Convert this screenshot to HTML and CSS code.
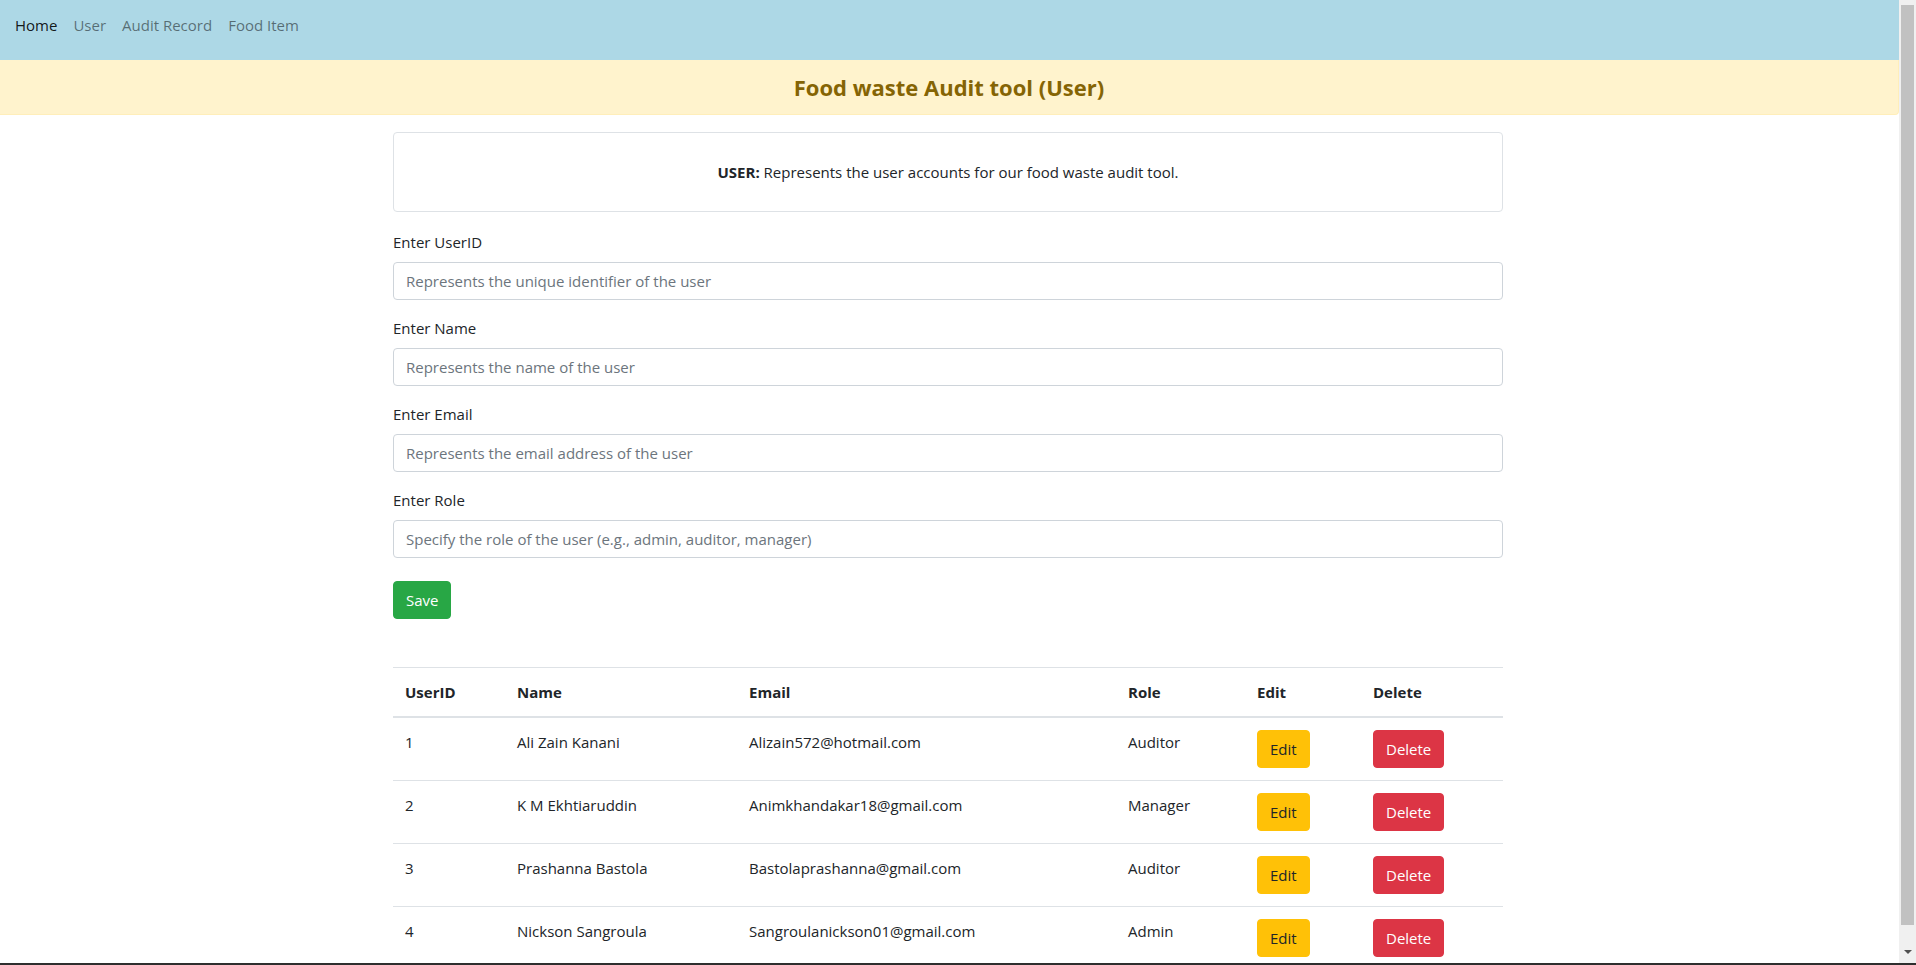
FILE: index.html
```html
<!DOCTYPE html>
<html lang="en">
<head>
<meta charset="utf-8">
<title>Food waste Audit tool (User)</title>
<link rel="stylesheet" href="styles.css">
</head>
<body>
<div class="page">
  <nav class="navbar">
    <a class="nav-link active" href="#">Home</a>
    <a class="nav-link" href="#">User</a>
    <a class="nav-link" href="#">Audit Record</a>
    <a class="nav-link" href="#">Food Item</a>
  </nav>
  <div class="banner">
    <h3 class="banner-title">Food waste Audit tool (User)</h3>
  </div>
  <main class="container">
    <div class="info-box">
      <p class="info-text"><strong>USER:</strong> Represents the user accounts for our food waste audit tool.</p>
    </div>
    <form class="user-form">
      <div class="form-group">
        <label class="form-label" for="uid">Enter UserID</label>
        <input class="form-control" id="uid" type="text" placeholder="Represents the unique identifier of the user">
      </div>
      <div class="form-group">
        <label class="form-label" for="uname">Enter Name</label>
        <input class="form-control" id="uname" type="text" placeholder="Represents the name of the user">
      </div>
      <div class="form-group">
        <label class="form-label" for="uemail">Enter Email</label>
        <input class="form-control" id="uemail" type="text" placeholder="Represents the email address of the user">
      </div>
      <div class="form-group">
        <label class="form-label" for="urole">Enter Role</label>
        <input class="form-control" id="urole" type="text" placeholder="Specify the role of the user (e.g., admin, auditor, manager)">
      </div>
      <button class="btn btn-save" type="button">Save</button>
    </form>
    <table class="data-table">
      <colgroup>
        <col class="col-id">
        <col class="col-name">
        <col class="col-email">
        <col class="col-role">
        <col class="col-edit">
        <col class="col-delete">
      </colgroup>
      <thead>
        <tr><th>UserID</th><th>Name</th><th>Email</th><th>Role</th><th>Edit</th><th>Delete</th></tr>
      </thead>
      <tbody>
        <tr><td>1</td><td>Ali Zain Kanani</td><td>Alizain572@hotmail.com</td><td>Auditor</td><td><button class="btn btn-edit" type="button">Edit</button></td><td><button class="btn btn-delete" type="button">Delete</button></td></tr>
        <tr><td>2</td><td>K M Ekhtiaruddin</td><td>Animkhandakar18@gmail.com</td><td>Manager</td><td><button class="btn btn-edit" type="button">Edit</button></td><td><button class="btn btn-delete" type="button">Delete</button></td></tr>
        <tr><td>3</td><td>Prashanna Bastola</td><td>Bastolaprashanna@gmail.com</td><td>Auditor</td><td><button class="btn btn-edit" type="button">Edit</button></td><td><button class="btn btn-delete" type="button">Delete</button></td></tr>
        <tr><td>4</td><td>Nickson Sangroula</td><td>Sangroulanickson01@gmail.com</td><td>Admin</td><td><button class="btn btn-edit" type="button">Edit</button></td><td><button class="btn btn-delete" type="button">Delete</button></td></tr>
      </tbody>
    </table>
  </main>
</div>
<div class="scrollbar">
  <div class="scroll-thumb"></div>
  <div class="scroll-arrow"></div>
</div>
<div class="taskbar-edge"></div>
</body>
</html>
```
FILE: styles.css
```css
* { box-sizing: border-box; }

html, body {
  margin: 0;
  height: 100%;
}

body {
  display: flex;
  overflow: hidden;
  font-family: "Open Sans", "Noto Sans", "Liberation Sans", sans-serif;
  font-size: 16px;
  line-height: 24px;
  color: #212529;
  background: #fff;
}

.page {
  flex: 1;
  min-width: 0;
  height: 100%;
  overflow: hidden;
}

.navbar {
  height: 60px;
  background: #add8e6;
  display: flex;
  align-items: flex-start;
  padding: 13px 0 0 7px;
  font-size: 15px;
}

.nav-link {
  padding: 0 8px;
  color: rgba(0, 0, 0, 0.5);
  text-decoration: none;
}

.nav-link.active {
  color: rgba(0, 0, 0, 0.9);
}

.banner {
  height: 55px;
  background: #fff3cd;
  border-bottom: 1px solid #ffeeba;
  border-right: 1px solid #ffeeba;
  border-radius: 0 0 4px 0;
  display: flex;
  align-items: center;
  justify-content: center;
}

.banner-title {
  margin: 0;
  font-size: 22px;
  font-weight: 700;
  color: #856404;
  line-height: 28px;
}

.container {
  width: 1110px;
  margin-left: calc((100% - 1113px) / 2);
}

.info-box {
  margin-top: 17px;
  margin-bottom: 18px;
  height: 80px;
  border: 1px solid #dee2e6;
  border-radius: 4px;
  display: flex;
  align-items: center;
  justify-content: center;
}

.info-text {
  margin: 0;
  font-size: 15px;
}

.form-group {
  margin-bottom: 16px;
}

.form-label {
  display: block;
  margin-bottom: 8px;
  font-size: 15px;
}

.form-control {
  display: block;
  width: 100%;
  height: 38px;
  padding: 6px 12px;
  font-family: inherit;
  font-size: 15px;
  line-height: 24px;
  color: #495057;
  background: #fff;
  border: 1px solid #ced4da;
  border-radius: 4px;
}

.form-control::placeholder {
  color: #6c757d;
  opacity: 1;
}

.btn {
  display: inline-block;
  height: 38px;
  padding: 6px 12px;
  font-family: inherit;
  font-size: 15px;
  line-height: 24px;
  border: 1px solid transparent;
  border-radius: 4px;
  cursor: pointer;
}

.btn-save {
  margin-top: 7px;
  background: #28a745;
  border-color: #28a745;
  color: #fff;
}

.btn-edit {
  background: #ffc107;
  border-color: #ffc107;
  color: #212529;
}

.btn-delete {
  background: #dc3545;
  border-color: #dc3545;
  color: #fff;
}

.data-table {
  width: 100%;
  margin-top: 48px;
  border-collapse: collapse;
  table-layout: fixed;
  font-size: 15px;
}

.col-id { width: 112px; }
.col-name { width: 232px; }
.col-email { width: 379px; }
.col-role { width: 129px; }
.col-edit { width: 116px; }
.col-delete { width: 142px; }

.data-table th,
.data-table td {
  padding: 12px;
  text-align: left;
  vertical-align: top;
  border-top: 1px solid #dee2e6;
}

.data-table th {
  font-weight: 700;
  vertical-align: bottom;
  border-bottom: 2px solid #dee2e6;
}

.scrollbar {
  width: 17px;
  height: 100%;
  background: #f0f0f0;
  display: flex;
  flex-direction: column;
  align-items: center;
  padding-top: 5px;
}

.scroll-thumb {
  width: 13px;
  height: 920px;
  background: #c1c1c1;
}

.scroll-arrow {
  margin-top: 25px;
  width: 0;
  height: 0;
  border-left: 4px solid transparent;
  border-right: 4px solid transparent;
  border-top: 4px solid #505050;
}

.taskbar-edge {
  position: fixed;
  left: 0;
  right: 0;
  bottom: 0;
  height: 2px;
  background: #2e2e2e;
}
```
